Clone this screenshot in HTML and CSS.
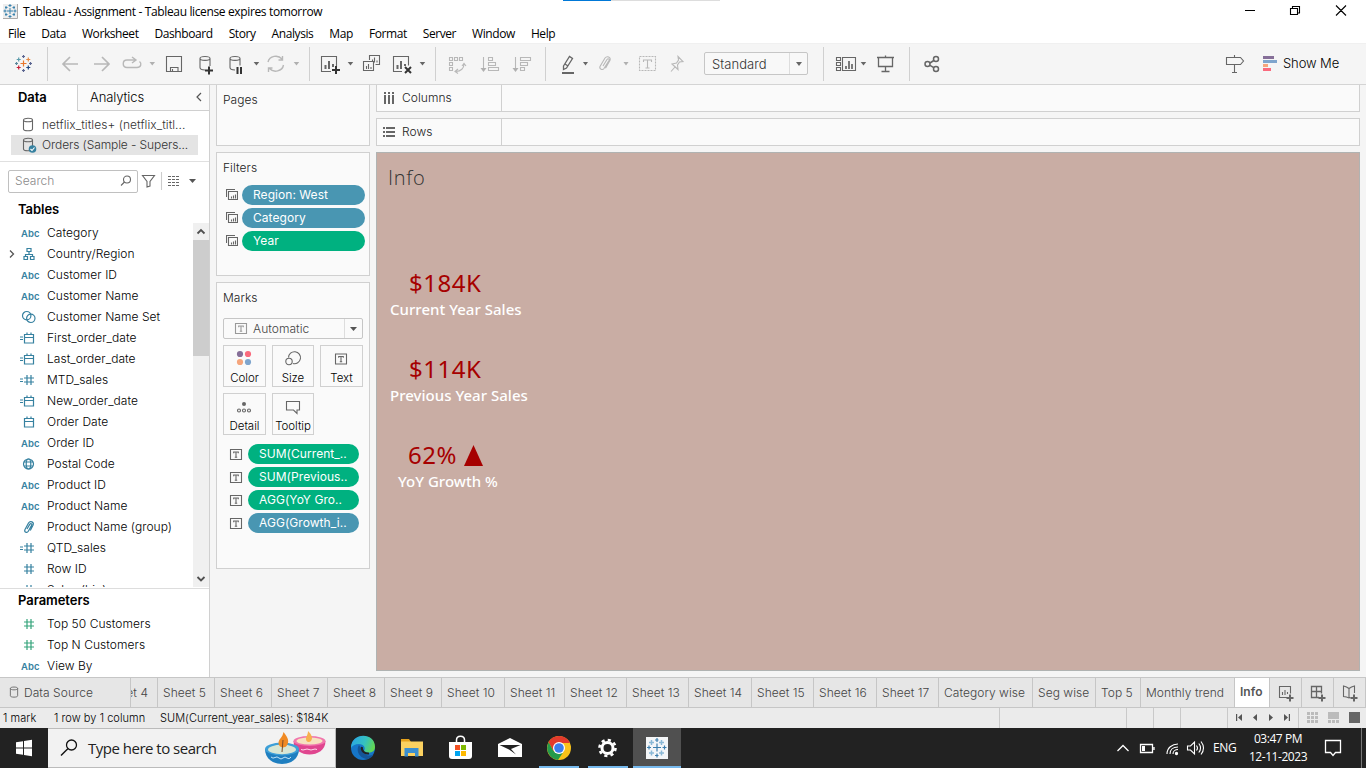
FILE: index.html
```html
<!DOCTYPE html>
<html lang="en">
<head>
<meta charset="utf-8">
<title>Tableau - Assignment</title>
<link rel="stylesheet" href="styles.css">
</head>
<body>
<svg class="defs" width="0" height="0">
  <symbol id="hash" viewBox="0 0 18 14"><path d="M7 2v10M11 2v10M4 5h10M4 9h10"/></symbol>
  <symbol id="eqhash" viewBox="0 0 18 14"><path d="M7 2v10M11 2v10M4 5h10M4 9h10M0 6h3M0 8.500h3"/></symbol>
  <symbol id="cal" viewBox="0 0 18 14"><path d="M4.500 3.500h9v8.500h-9zM4.500 6.500h9M7 1.500v2M11 1.500v2"/></symbol>
  <symbol id="eqcal" viewBox="0 0 18 14"><path d="M4.500 3.500h9v8.500h-9zM4.500 6.500h9M7 1.500v2M11 1.500v2M0 6h3M0 8.500h3"/></symbol>
  <symbol id="tree" viewBox="0 0 18 14"><path d="M7 1.500h4v3h-4zM9 4.500v3M5.500 9.500v-2h7v2M4 9.500h3.500v3H4zM10.500 9.500H14v3h-3.500z"/></symbol>
  <symbol id="rings" viewBox="0 0 18 14"><circle cx="6.700" cy="5.700" r="4.200"/><circle cx="10.800" cy="8.300" r="4.200"/></symbol>
  <symbol id="globe" viewBox="0 0 18 14"><circle cx="8.500" cy="7" r="5"/><ellipse cx="8.500" cy="7" rx="2.300" ry="5"/><path d="M4 5h9M4 9h9"/></symbol>
  <symbol id="clip" viewBox="0 0 18 14"><path d="M7 9l2.700-4.600c1-1.600 2.700-.6 1.900 1L8.300 11.300c-1.300 2.200-4.500.8-3.300-1.800L8.500 3c1.700-2.800 6-1 4.500 2.300L10.300 10.500"/></symbol>
  <symbol id="cyl" viewBox="0 0 12 16"><path d="M1.500 3v9c0 2.300 9 2.300 9 0V3c0-2.300-9-2.300-9 0c0 2.300 9 2.300 9 0"/></symbol>
  <symbol id="tbox" viewBox="0 0 14 13"><path d="M1.500 1.500h11v10h-11zM4.700 5.200V4h4.600v1.200M7 4v5.300M5.800 9.300h2.400"/></symbol>
  <symbol id="ctx" viewBox="0 0 12 12"><path d="M.5 8V.5H9M2.500 10.500v-8h9v8zM5.500 9.500v-2M7.500 9.500V6.500M9.500 9.500v-4"/></symbol>
</svg>

<header class="titlebar">
  <svg width="23" height="22" viewBox="0 0 23 22"><rect x="3" y="4" width="14" height="14" fill="#eee"/><path d="M3 18.500h14.500V4" stroke="#aaa" fill="none"/><g stroke="#3b83ae" fill="none"><path d="M7 11h6M10 8v6M8.500 5.500h3M10 4v3M8.500 16.500h3M10 15v3M3.500 11h3M5 9.500v3M13.500 11h3M15 9.500v3M5 7.500h2.500M6 6v3M12.500 7.500H15M14 6v3M5 14.500h2.500M6 13v3M12.500 14.500H15M14 13v3"/></g></svg>
  <span class="title">Tableau - Assignment - Tableau license expires tomorrow</span>
  <span class="accent"><i></i></span>
  <svg class="wctl" width="136" height="22" viewBox="1230 0 136 22"><path d="M1245 10.500h10M1290.500 8.500h7v6h-7zM1292.500 8.500v-2h7v6.500h-2M1336 5.500l10 10M1346 5.500l-10 10" stroke="#000" fill="none" stroke-width="1.100"/></svg>
</header>

<nav class="menu">
  <span>File</span><span>Data</span><span>Worksheet</span><span>Dashboard</span><span>Story</span><span>Analysis</span><span>Map</span><span>Format</span><span>Server</span><span>Window</span><span>Help</span>
</nav>

<div class="toolbar">
  <svg width="55" height="41" viewBox="0 43 55 41"><g stroke-width="1.200"><path d="M20.500 63.500h6M23.500 60.500v6" stroke="#e8762c"/><path d="M22 56.500h3M23.500 55v3" stroke="#5b6591"/><path d="M22 70.500h3M23.500 69v3" stroke="#5b6591"/><path d="M15 63.500h3M16.500 62v3" stroke="#5b879b"/><path d="M29 63.500h3M30.500 62v3" stroke="#5b6591"/><path d="M16.700 59.500h4M18.700 57.500v4" stroke="#5b9bab"/><path d="M26.300 59.500h4M28.300 57.500v4" stroke="#e88a45"/><path d="M16.700 67.500h4M18.700 65.500v4" stroke="#c72037"/><path d="M26.300 67.500h4M28.300 65.500v4" stroke="#1f447e"/></g><path class="sep" d="M47.500 47v34"/></svg>
  <svg class="dim" width="60" height="41" viewBox="55 43 60 41"><path d="M62.500 64h15.500M70 57l-7 7 7 7M94 64h15.500M102 57l7 7-7 7" stroke-width="1.700"/></svg>
  <svg class="dim" width="45" height="41" viewBox="115 43 45 41"><path d="M135 60h-8c-5 0-5 7.500 0 7.500h10c4 0 5-4 2.500-6M132 57l4 3-4 3" stroke-width="1.400"/><path class="fill" d="M149.500 62h5.500l-2.700 3.500z"/></svg>
  <svg width="28" height="41" viewBox="160 43 28 41"><path d="M166.500 56.500h15v15h-15zM170.500 71.500v-4h7.500v4M172.500 69v2.500"/></svg>
  <svg width="32" height="41" viewBox="188 43 32 41"><path d="M210 66v-7.500c0-2.700-10-2.700-10 0v9c0 1.500 2 2.500 5 2.500M200 58.500c0 2.500 10 2.500 10 0"/><path class="bold" d="M205 70.500h8M209 66.500v8"/></svg>
  <svg width="42" height="41" viewBox="220 43 42 41"><path d="M240 65.500v-7c0-2.700-10-2.700-10 0v9c0 1.500 2 2.500 5 2.500M230 58.500c0 2.500 10 2.500 10 0"/><path class="bold" d="M237.500 67v7M241 67v7"/><path class="fill" d="M253.700 62h5.500l-2.700 3.500z"/></svg>
  <svg class="dim" width="53" height="41" viewBox="262 43 53 41"><path d="M268 62a8 7.500 0 0 1 14-3M283.500 65a8 7.500 0 0 1-14 3.500M282.500 56v4h-4M268.500 72v-4h4" stroke-width="1.400"/><path class="fill" d="M293.700 62h5.500l-2.700 3.500z"/><path class="sep" d="M309.500 47v34"/></svg>
  <svg width="45" height="41" viewBox="315 43 45 41"><path d="M331 71.500h-9.500v-15h15v10"/><path d="M325.500 69v-4M329 69v-8M333 67v-3" stroke-width="2"/><path class="bold" d="M332 70h8M336 66v8"/><path class="fill" d="M347.700 62h5.500l-2.700 3.500z"/></svg>
  <svg width="25" height="41" viewBox="360 43 25 41"><path d="M369.500 60v-4.500h10v9h-4M363.500 61.500h10v9h-10zM366.500 69v-3M368.500 69v-5M371 69v-2M372.500 61v-1.500M374.500 62.500v-5M377 62.500v-2"/></svg>
  <svg width="55" height="41" viewBox="385 43 55 41"><path d="M402 71.500h-8.500v-15h15v9"/><path d="M397.500 69v-4M401 69v-8M405 66v-2" stroke-width="2"/><path class="bold" d="M405 67l6 6M411 67l-6 6"/><path class="fill" d="M419.700 62h5.500l-2.700 3.500z"/><path class="sep" d="M435.500 47v34"/></svg>
  <svg class="dim" width="33" height="41" viewBox="440 43 33 41"><path d="M449.500 57.500h3v3h-3zM454.500 57.500h3v3h-3zM459.500 57.500h3v3h-3zM449.500 62.500h3v3h-3zM449.500 67.500h3v3h-3zM464 64c0 4-3 7.500-8 7.500M462 66l2-2.500 2 2.500M458 69l-3 2.500 3 2"/></svg>
  <svg class="dim" width="32" height="41" viewBox="473 43 32 41"><path d="M483.500 57v13M488.500 57.500h4v3h-4zM488.500 62.500h7v3h-7zM488.500 67.500h10v3h-10z"/><path class="fill" d="M480.500 68h6l-3 4z"/></svg>
  <svg class="dim" width="45" height="41" viewBox="505 43 45 41"><path d="M515.500 57v13M520.500 57.500h10v3h-10zM520.500 62.500h7v3h-7zM520.500 67.500h4v3h-4z"/><path class="fill" d="M512.500 68h6l-3 4z"/><path class="sep" d="M545.500 47v34"/></svg>
  <svg width="42" height="41" viewBox="550 43 42 41"><path d="M563.500 66l6-9.500 3 2-6 9.500-3 1.500zM565 64l3 2" stroke-width="1.300"/><path d="M562 73h12" stroke-width="2"/><path class="fill" d="M583 62h5l-2.500 3.500z"/></svg>
  <svg class="dim" width="40" height="41" viewBox="592 43 40 41"><path d="M603 66l4-6.500c1-1.500 2.700-.5 2 1l-5 8c-1.500 2-5 .5-4-2l5-8.500c2-2.500 6-1 5 2.300l-4.500 8"/><path class="fill" d="M623.500 62h5l-2.500 3.500z"/></svg>
  <svg class="dim" width="30" height="41" viewBox="632 43 30 41"><path d="M639.500 56.500h16v14h-16z" stroke-dasharray="2 1"/><path d="M643.500 62v-2h8v2M647.500 60v8M645.500 68h4"/></svg>
  <svg class="dim" width="42" height="41" viewBox="662 43 42 41"><path d="M678 56.500l5 5-3.500.5-2 3 .5 4.500-6-5.500 4.500-1 2-3zM675 67l-4 4.500"/></svg>
  <div class="zoomsel"><span>Standard</span><b><svg width="6" height="4" viewBox="0 0 6 4"><path class="fill" d="M0 0h6L3 4z"/></svg></b></div>
  <svg width="62" height="41" viewBox="808 43 62 41"><path class="sep" d="M823.500 47v34"/><path d="M836.500 57.500h4v3h-4zM836.500 62.500h4v3h-4zM836.500 67.500h4v3h-4zM842.500 57.500h13v13h-13z"/><path d="M846 69v-3M849 69v-8M852 69v-5" stroke-width="1.700"/><path class="fill" d="M860.700 62h5.500l-2.700 3.500z"/></svg>
  <svg width="30" height="41" viewBox="870 43 30 41"><path d="M877 57.500h17M878.500 57.500v9h14v-9M885.500 55.500v2M885.500 66.500v5M881.500 71.500h8" stroke-width="1.300"/></svg>
  <svg width="50" height="41" viewBox="900 43 50 41"><path class="sep" d="M909.500 47v34"/><g stroke-width="1.500"><circle cx="927.500" cy="64" r="2.500"/><circle cx="936" cy="59" r="2.500"/><circle cx="936" cy="69" r="2.500"/><path d="M930 63l3.800-2.500M930 65.300l3.800 2.400"/></g></svg>
  <svg class="sign" width="30" height="41" viewBox="1220 43 30 41"><path d="M1226.500 57.500h14l3 3.500-3 3.500h-14zM1234.500 55v2.500M1234.500 64.500v8M1232 72.500h5"/></svg>
  <svg width="33" height="41" viewBox="1250 43 33 41"><path stroke="none" fill="#866f98" d="M1263 56h11v3h-11z"/><path stroke="none" fill="#7fa5cd" d="M1263 60h14v3h-14z"/><path stroke="none" fill="#f5a57c" d="M1263 64h5v3h-5z"/><path stroke="none" fill="#fa6a7d" d="M1263 68h8v3h-8z"/></svg>
  <span class="showme">Show Me</span>
</div>

<main class="work">
  <aside class="side">
    <div class="sidetabs"><b>Data</b><div><span>Analytics</span><svg width="8" height="10" viewBox="0 0 8 10"><path d="M6 1L2 5l4 4" stroke="#555" fill="none" stroke-width="1.200"/></svg></div></div>
    <div class="sources">
      <div><svg width="12" height="16" class="gi"><use href="#cyl"/></svg><span>netflix_titles+ (netflix_titl...</span></div>
      <div class="sel"><svg width="16" height="16" viewBox="0 0 16 16" class="gi"><use href="#cyl" width="12" height="16"/><circle cx="10.500" cy="12" r="3.800" fill="#3681a0" stroke="none"/><path d="M8.500 12l1.500 1.500 2.500-3" stroke="#fff"/></svg><span>Orders (Sample - Supers...</span></div>
    </div>
    <div class="searchrow">
      <div class="search"><span>Search</span><svg width="12" height="12" viewBox="0 0 12 12" class="gi"><circle cx="7" cy="4.500" r="3.500"/><path d="M4.500 7L1 10.500"/></svg></div>
      <svg width="71" height="24" viewBox="138 169 71 24" class="gi"><path d="M142.500 175.500h12l-4.500 6v4.500l-3 1v-5.500z"/><path d="M161.500 172v18" stroke="#ccc"/><path d="M168 176.500h12M168 179.500h12M168 182.500h12M168 185.500h12" stroke-dasharray="3 1" /><path d="M189 179h7l-3.500 4z" fill="#555" stroke="none"/></svg>
    </div>
    <h2>Tables</h2>
    <div class="listwrap">
      <div class="list">
        <div><em>Abc</em><span>Category</span></div>
        <div><svg class="exp" width="6" height="10" viewBox="0 0 6 10"><path d="M1 1.500L4.500 5 1 8.500"/></svg><svg class="fi"><use href="#tree"/></svg><span>Country/Region</span></div>
        <div><em>Abc</em><span>Customer ID</span></div>
        <div><em>Abc</em><span>Customer Name</span></div>
        <div><svg class="fi"><use href="#rings"/></svg><span>Customer Name Set</span></div>
        <div><svg class="fi"><use href="#eqcal"/></svg><span>First_order_date</span></div>
        <div><svg class="fi"><use href="#eqcal"/></svg><span>Last_order_date</span></div>
        <div><svg class="fi"><use href="#eqhash"/></svg><span>MTD_sales</span></div>
        <div><svg class="fi"><use href="#eqcal"/></svg><span>New_order_date</span></div>
        <div><svg class="fi"><use href="#cal"/></svg><span>Order Date</span></div>
        <div><em>Abc</em><span>Order ID</span></div>
        <div><svg class="fi"><use href="#globe"/></svg><span>Postal Code</span></div>
        <div><em>Abc</em><span>Product ID</span></div>
        <div><em>Abc</em><span>Product Name</span></div>
        <div><svg class="fi"><use href="#clip"/></svg><span>Product Name (group)</span></div>
        <div><svg class="fi"><use href="#eqhash"/></svg><span>QTD_sales</span></div>
        <div><svg class="fi"><use href="#hash"/></svg><span>Row ID</span></div>
        <div><svg class="fi"><use href="#hash"/></svg><span>Sales (bin)</span></div>
      </div>
      <div class="scroll"><svg width="16" height="17" viewBox="0 0 16 17"><path d="M4.500 10.500L8 7l3.500 3.500"/></svg><i></i><svg width="16" height="17" viewBox="0 0 16 17"><path d="M4.500 7L8 10.500 11.500 7"/></svg></div>
    </div>
    <div class="params">
      <h2>Parameters</h2>
      <div class="list">
        <div><svg class="fi green"><use href="#hash"/></svg><span>Top 50 Customers</span></div>
        <div><svg class="fi green"><use href="#hash"/></svg><span>Top N Customers</span></div>
        <div><em>Abc</em><span>View By</span></div>
      </div>
    </div>
  </aside>

  <section class="cards">
    <div class="card pages"><h3>Pages</h3></div>
    <div class="card filters"><h3>Filters</h3>
      <div class="frow"><svg class="gi" width="12" height="12"><use href="#ctx"/></svg><span class="pill blue">Region: West</span></div>
      <div class="frow"><svg class="gi" width="12" height="12"><use href="#ctx"/></svg><span class="pill blue">Category</span></div>
      <div class="frow"><svg class="gi" width="12" height="12"><use href="#ctx"/></svg><span class="pill">Year</span></div>
    </div>
    <div class="card marks"><h3>Marks</h3>
      <div class="marktype"><svg class="gi faint" width="14" height="13"><use href="#tbox"/></svg><span>Automatic</span><b><svg width="7" height="4" viewBox="0 0 7 4"><path d="M0 0h7L3.500 4z" fill="#555"/></svg></b></div>
      <div class="btns">
        <div><svg width="20" height="18" viewBox="1 1 20 18"><circle cx="6" cy="5" r="3.100" fill="#866f98"/><circle cx="14" cy="5" r="3.100" fill="#fa6a7d"/><circle cx="6" cy="13" r="3.100" fill="#f5a57c"/><circle cx="14" cy="13" r="3.100" fill="#7fa5cd"/></svg><span>Color</span></div>
        <div><svg class="gi" width="20" height="18" viewBox="0 0 20 18"><path d="M5.500 7.500a6 6 0 1 1 4.500 6"/><circle cx="6" cy="11.500" r="3.200"/></svg><span>Size</span></div>
        <div><svg class="gi" width="20" height="18" viewBox="1 0 20 18"><use href="#tbox" x="3" y="2.500" width="14" height="13"/></svg><span>Text</span></div>
        <div><svg class="gi" width="20" height="18" viewBox="1 0 20 18"><circle cx="10" cy="6" r="2" fill="#666" stroke="none"/><circle cx="5" cy="12.500" r="1.500"/><circle cx="10" cy="12.500" r="1.500"/><circle cx="15" cy="12.500" r="1.500"/></svg><span>Detail</span></div>
        <div><svg class="gi" width="20" height="18" viewBox="0 0 20 18"><path d="M3.500 3.500h13v8.500h-2.500v3.500L10.500 12h-7z"/></svg><span>Tooltip</span></div>
      </div>
      <div class="mrow"><svg class="gi" width="14" height="13"><use href="#tbox"/></svg><span class="pill">SUM(Current_..</span></div>
      <div class="mrow"><svg class="gi" width="14" height="13"><use href="#tbox"/></svg><span class="pill">SUM(Previous..</span></div>
      <div class="mrow"><svg class="gi" width="14" height="13"><use href="#tbox"/></svg><span class="pill">AGG(YoY Gro..</span></div>
      <div class="mrow"><svg class="gi" width="14" height="13"><use href="#tbox"/></svg><span class="pill blue">AGG(Growth_i..</span></div>
    </div>
  </section>

  <section class="view">
    <div class="shelf"><div><svg width="14" height="14" viewBox="0 0 14 14"><path fill="#666" d="M2 1h2v2H2zM6 1h2v2H6zM10 1h2v2h-2zM2 4h2v9H2zM6 4h2v9H6zM10 4h2v9h-2z"/></svg><span>Columns</span></div></div>
    <div class="shelf"><div><svg width="14" height="14" viewBox="0 0 14 14"><path fill="#666" d="M1 2h2v2H1zM1 6h2v2H1zM1 10h2v2H1zM4 2h9v2H4zM4 6h9v2H4zM4 10h9v2H4z"/></svg><span>Rows</span></div></div>
    <div class="canvas">
      <h1>Info</h1>
      <div class="kpi k1"><strong>$184K</strong><span>Current Year Sales</span></div>
      <div class="kpi k2"><strong>$114K</strong><span>Previous Year Sales</span></div>
      <div class="kpi k3"><strong>62% <svg width="19" height="21" viewBox="0 0 19 21"><path d="M9.500 0L19 21H0z" fill="#a60000"/></svg></strong><span>YoY Growth %</span></div>
    </div>
  </section>
</main>

<div class="tabs">
  <div class="ds"><svg class="gi" width="10" height="13" viewBox="0 0 12 16"><use href="#cyl" width="12" height="16"/></svg><span>Data Source</span></div>
  <div class="cut"><span>et 4</span></div><div>Sheet 5</div><div>Sheet 6</div><div>Sheet 7</div><div>Sheet 8</div><div>Sheet 9</div><div>Sheet 10</div><div>Sheet 11</div><div>Sheet 12</div><div>Sheet 13</div><div>Sheet 14</div><div>Sheet 15</div><div>Sheet 16</div><div>Sheet 17</div><div>Category wise</div><div>Seg wise</div><div>Top 5</div><div>Monthly trend</div><div class="on">Info</div>
  <div class="ic"><svg class="gi" width="31" height="28" viewBox="1270 678 31 28"><path d="M1287 697.500h-7.500v-11h11v7M1282.500 695v-3M1285 695v-5M1287.500 694v-2"/><path d="M1286.500 698h7M1290 694.500v7" stroke-width="2"/></svg></div>
  <div class="ic"><svg class="gi" width="31" height="28" viewBox="1302 678 31 28"><path d="M1319 697.500h-7.500v-11h10v7M1311.500 691.500h10M1316.500 686.500v11" stroke-width="1.300"/><path d="M1318.500 698h7M1322 694.500v7" stroke-width="2"/></svg></div>
  <div class="ic"><svg class="gi" width="31" height="28" viewBox="1334 678 31 28"><path d="M1354.500 693v-7l-3 1-2.500 1.500-2.500-1.500-3-1v10.500l3 .5 2.500 1 1.500-.5M1349 688.500v9"/><path d="M1350.500 698h7M1354 694.500v7" stroke-width="2"/></svg></div>
</div>

<div class="status">
  <span class="s1">1 mark</span><span class="s2">1 row by 1 column</span><span class="s3">SUM(Current_year_sales): $184K</span>
  <svg width="370" height="20" viewBox="996 708 370 20"><path d="M999.500 708v20M1126.500 708v20M1153.500 708v20M1180.500 708v20M1227.500 708v20M1298.500 708v20" stroke="#c9c9c9"/><path fill="#555" d="M1236 714h1.200v7H1236zM1242 714v7l-4-3.500zM1257 714v7l-4-3.500zM1269 714v7l4-3.500zM1284 714v7l4-3.500zM1288.800 714h1.200v7h-1.200z"/><path fill="#bbb" d="M1307 712h3v3h-3zM1311 712h3v3h-3zM1315 712h3v3h-3zM1307 716h3v3h-3zM1311 716h3v3h-3zM1315 716h3v3h-3zM1307 720h3v3h-3zM1311 720h3v3h-3zM1315 720h3v3h-3zM1328 712h11v7h-11zM1328 720h3v3h-3zM1332 720h3v3h-3zM1336 720h3v3h-3z"/><rect x="1349" y="712" width="11" height="11" fill="#666"/></svg>
</div>

<footer class="taskbar">
  <svg width="48" height="40" viewBox="0 728 48 40"><path fill="#fff" d="M16 742.200l7-1v6.300h-7zM24 741l8-1.200v7.700h-8zM16 748.500h7v6.300l-7-1zM24 748.500h8v7.700l-8-1.200z"/></svg>
  <div class="tsearch">
    <svg width="40" height="40" viewBox="48 728 40 40"><circle cx="71.500" cy="745" r="5" fill="none" stroke="#111" stroke-width="1.300"/><path d="M67.800 748.700L61 755.500" stroke="#111" stroke-width="1.400"/></svg>
    <span>Type here to search</span>
    <svg class="diya" width="66" height="38" viewBox="263 729 66 38"><path d="M293.500 741c0 18 32 18 32 0z" fill="#e0468f"/><ellipse cx="309.500" cy="741" rx="16" ry="5" fill="#f176ad"/><ellipse cx="309.500" cy="741" rx="13" ry="3.500" fill="#f6e3c0"/><path d="M308 731c4 4 5 7 3 10-2 2-5 1-5-2 0-3 2-4 2-8z" fill="#f7b04e"/><path d="M301 749.500q2 1 4 0t4 0 4 0 4 0" stroke="#ffd9ea" fill="none"/><path d="M265 749c0 20 34 20 34 0z" fill="#1f7fc0"/><ellipse cx="282" cy="749" rx="17" ry="6.500" fill="#3d9fd8"/><ellipse cx="282" cy="749.500" rx="14" ry="4.700" fill="#d8e6d4"/><path d="M283.500 732c5 6 6 10 3 14-3 3-8 1-8-3 0-4 4-5 5-11z" fill="#f08a24"/><path d="M283 740l-1 12" stroke="#7a4b28"/><path d="M271 757q2 2 4 .5t4 .5 4 0 4 0 4-1" stroke="#bfe4f8" fill="none"/></svg>
  </div>
  <svg class="app" width="51" height="40" viewBox="336 728 51 40"><defs><linearGradient id="eg" x1="0" x2="1" y1="0.300" y2="0.600"><stop offset="0" stop-color="#2aa5e4"/><stop offset=".55" stop-color="#35c1c0"/><stop offset="1" stop-color="#66d84a"/></linearGradient></defs><circle cx="363" cy="748" r="12" fill="#1675c8"/><path d="M351 748c0-16 24-16 24-1 0 6-7 7-11 4 2-3 0-7-5-7-4 0-7 2-8 4z" fill="url(#eg)"/><path d="M359 745c-4 7 2 14 9 14 3-1 5-3 5.500-4.500-4 2-10 1-11-4z" fill="#155597"/><path d="M362 747c-1 4 3 7 7 6.500" stroke="#222" fill="none" stroke-width="2"/></svg>
  <svg class="app" width="49" height="40" viewBox="387 728 49 40"><path fill="#e6a21c" d="M401 739h8l2 3h-10z"/><path fill="#fbd160" d="M401 741.500h22V756h-22z"/><path fill="#3b8fd0" d="M404.500 756.500v-8.500h14v8.500h-3.500v-3.500h-7v3.500z"/></svg>
  <svg class="app" width="49" height="40" viewBox="436 728 49 40"><path d="M456.500 743v-3c0-5 8-5 8 0v3" stroke="#fff" fill="none" stroke-width="1.500"/><path d="M449 742h23v14c0 2-1 3-3 3h-17c-2 0-3-1-3-3z" fill="#fff"/><path fill="#f25022" d="M455 745h5v5h-5z"/><path fill="#7fba00" d="M461 745h5v5h-5z"/><path fill="#00a4ef" d="M455 751h5v5h-5z"/><path fill="#ffb900" d="M461 751h5v5h-5z"/></svg>
  <svg class="app" width="49" height="40" viewBox="485 728 49 40"><path fill="#fff" d="M498 744l12-6 12 6v13h-24z"/><path fill="#222" d="M499.500 745h21l-9.500 4 5 5.500-7-5z"/></svg>
  <svg class="app" width="49" height="40" viewBox="534 728 49 40"><circle cx="559" cy="748" r="12" fill="#f9c21a"/><path fill="#e23a2c" d="M548.500 742.200a12 12 0 0 1 21.500.8h-11l-5.500 8z"/><path fill="#249a4b" d="M548.600 742.200a12 12 0 0 0 9.400 17.700l6-9-5 3-5.500-3z"/><circle cx="559" cy="748" r="6" fill="#fff"/><circle cx="559" cy="748" r="4.800" fill="#3b7ded"/><path fill="#76b9ed" d="M539 766h40v2h-40z"/></svg>
  <svg class="app" width="50" height="40" viewBox="583 728 50 40"><circle cx="607.500" cy="748" r="5.500" fill="none" stroke="#fff" stroke-width="3"/><circle cx="607.500" cy="748" r="8" fill="none" stroke="#fff" stroke-width="2.600" stroke-dasharray="3.140 3.143"/><path fill="#76b9ed" d="M588 766h40v2h-40z"/></svg>
  <svg class="app active" width="48" height="40" viewBox="633 728 48 40"><path fill="#f4f6f8" d="M646 737h22v22h-22z"/><g stroke="#8ab8d6" stroke-width="1.500"><path d="M649 742.500h5M651.500 740v5M659 742.500h5M661.500 740v5M649 753h5M651.500 750.500v5M659 753h5M661.500 750.500v5"/></g><path d="M653 747.500h8M657 743.500v8M655 740h3.500M657 738v4M655 755.500h3.500M657 753.500v4M647 747.500h4M649 745.500v4M662.500 747.500h4M664.500 745.500v4" stroke="#3d7fae" stroke-width="1.200"/><path fill="#76b9ed" d="M633 766h48v2h-48z"/></svg>
  <svg class="tray" width="97" height="40" viewBox="1110 728 97 40"><g stroke="#fff" fill="none" stroke-width="1.300"><path d="M1117.500 751l5.500-5.500 5.500 5.500M1140.500 744.500h12v8h-12zM1154 747v3"/><path fill="#fff" stroke="none" d="M1142 746h3v5h-3z"/><path d="M1167 754c0-6 5-10 11-10M1170 754c0-4 3-7 8-7M1173 754c0-2.500 2-4.500 5-4.500" stroke-width="1.100"/><circle cx="1176.500" cy="753.500" r="1" fill="#fff"/><path d="M1187.500 746h3l4-4v12l-4-4h-3zM1196.500 745.500q2 2.500 0 5M1198.800 743.500q3.500 4.500 0 9M1201 741.500q5 6.500 0 13" stroke-width="1.100"/></g></svg>
  <span class="eng">ENG</span>
  <div class="clock"><span>03:47 PM</span><span>12-11-2023</span></div>
  <svg class="note" width="56" height="40" viewBox="1310 728 56 40"><path d="M1325.500 740.500h15v12h-5l-2.500 3-2.500-3h-5z" stroke="#fff" fill="none" stroke-width="1.300"/><path d="M1361.500 728v40" stroke="#777"/></svg>
</footer>
</body>
</html>
```
FILE: styles.css
```css
* { box-sizing: border-box; }
body { margin: 0; width: 1366px; height: 768px; overflow: hidden; display: flex; flex-direction: column; background: #f5f5f5; color: #333; font: 300 12px/16px Inter, "Liberation Sans", sans-serif; letter-spacing: .05px; }
.defs { position: absolute; }
svg { flex: none; display: block; }
h1, h2, h3 { margin: 0; font-weight: 300; }
span { white-space: nowrap; }

.titlebar { height: 22px; flex: none; display: flex; align-items: center; background: #fff; color: #000; font: 12px "Open Sans", sans-serif; letter-spacing: -.36px; }
.title { width: 540px; }
.accent { align-self: flex-start; width: 157px; height: 1px; background: #ddd; }
.accent i { display: block; width: 48px; height: 1px; background: #0078d7; }
.wctl { margin-left: auto; }
.menu { height: 21px; flex: none; display: flex; align-items: center; gap: 16px; padding: 2px 0 0 8px; background: #fff; color: #000; font: 12px "Open Sans", sans-serif; letter-spacing: -.42px; }

.toolbar { height: 42px; flex: none; display: flex; background: #f5f5f5; border-bottom: 1px solid #d4d4d4; border-top: 1px solid #f0f0f0; }
.toolbar svg { fill: none; stroke: #666; stroke-width: 1.1; margin-top: -1px; }
.toolbar .dim { stroke: #b8b8b8; }
.toolbar .fill { fill: #666; stroke: none; }
.toolbar .dim .fill { fill: #b0b0b0; }
.toolbar .bold { stroke: #333; stroke-width: 2; }
.toolbar .sep { stroke: #d0d0d0; stroke-width: 1; }
.zoomsel { width: 104px; height: 23px; margin-top: 8px; border: 1px solid #c6c6c6; border-radius: 2px; display: flex; align-items: center; justify-content: space-between; background: #f8f8f8; color: #333; font-size: 13px; padding-left: 7px; }
.zoomsel b { width: 18px; height: 21px; border-left: 1px solid #ddd; display: flex; align-items: center; justify-content: center; }
.zoomsel svg { margin: 0; }
.toolbar .sign { margin-left: 270px; }
.showme { font-size: 13px; color: #000; padding-top: 11px; letter-spacing: -.1px; }

.work { height: 592px; flex: none; display: flex; }
.side { width: 210px; background: #fff; border-right: 1px solid #d0d0d0; display: flex; flex-direction: column; }
.sidetabs { height: 26px; flex: none; display: flex; color: #000; font-size: 13px; letter-spacing: -.1px; }
.sidetabs b { width: 77px; padding: 4px 0 0 18px; font-weight: 600; }
.sidetabs div { flex: 1; background: #fafafa; border-left: 1px solid #d0d0d0; border-bottom: 1px solid #d0d0d0; display: flex; align-items: center; justify-content: space-between; padding: 0 6px 1px 12px; color: #000; }
.sources { height: 51px; flex: none; border-bottom: 1px solid #e0e0e0; padding: 4px 11px 0; color: #333; }
.sources div { height: 20px; display: flex; align-items: center; padding-left: 11px; }
.sources span { margin-left: 8px; }
.sources .sel { background: #e4e4e4; letter-spacing: -.1px; }
.sources .sel span { margin-left: 4px; }
.gi { fill: none; stroke: #666; stroke-width: 1.1; }
.searchrow { height: 38px; flex: none; display: flex; align-items: center; padding-left: 8px; }
.search { width: 130px; height: 23px; border: 1px solid #c0c0c0; border-radius: 2px; display: flex; align-items: center; justify-content: space-between; padding: 0 5px 0 6px; color: #8a8a8a; }
h2 { font: 600 13px/18px Inter, sans-serif; color: #000; padding-left: 18px; flex: none; height: 23px; letter-spacing: -.05px; }
.listwrap { display: flex; height: 364px; flex: none; overflow: hidden; }
.list { flex: 1; }
.listwrap .list { margin-top: -1px; }
.list div { height: 21px; display: flex; align-items: center; padding-left: 20px; position: relative; color: #000; }
.list em { width: 27px; font: 600 9.500px Inter, sans-serif; color: #3681a0; padding: 2px 0 0 1px; }
.fi { width: 18px; height: 14px; margin-right: 9px; fill: none; stroke: #3681a0; stroke-width: 1.2; }
.green { stroke: #34a37b; }
.exp { position: absolute; left: 9px; top: 6px; fill: none; stroke: #555; stroke-width: 1.3; }
.scroll { width: 16px; background: #f0f0f0; display: flex; flex-direction: column; }
.scroll i { height: 116px; background: #cdcdcd; margin-bottom: auto; }
.scroll path { fill: none; stroke: #505050; stroke-width: 1.8; }
.params { border-top: 1px solid #ddd; margin-top: 1px; padding-top: 2px; }
.params h2 { height: 22px; }

.cards { width: 154px; margin-left: 6px; display: flex; flex-direction: column; gap: 6px; }
.card { border: 1px solid #d0d0d0; background: #fafafa; color: #222; }
.card h3 { font-size: 12px; padding: 7px 6px 0; }
.pages { height: 61px; border-top: 0; }
.filters { height: 124px; }
.marks { height: 287px; }
.frow { height: 20px; margin: 0 4px 3px 9px; display: flex; align-items: center; justify-content: space-between; }
.filters h3 { margin-bottom: 9px; }
.pill { height: 20px; width: 123px; border-radius: 10px; background: #00b180; color: #fff; padding: 0 0 0 11px; line-height: 20px; font-weight: 400; }
.pill.blue { background: #4996b2; }
.marktype { margin: 12px 6px 6px; height: 21px; border: 1px solid #c6c6c6; border-radius: 2px; display: flex; align-items: center; padding-left: 10px; color: #444; }
.marktype span { margin-left: 5px; }
.marktype b { margin-left: auto; width: 18px; height: 19px; border-left: 1px solid #ddd; display: flex; align-items: center; justify-content: center; }
.faint { stroke: #999; }
.btns { display: grid; grid-template-columns: 43px 42px 43px; gap: 6px; margin: 0 6px; }
.btns div { height: 42px; border: 1px solid #d0d0d0; display: flex; flex-direction: column; align-items: center; padding-top: 4px; font-size: 11.500px; letter-spacing: -.05px; color: #000; }
.btns span { margin-top: 2px; }
.mrow { height: 20px; margin: 0 10px 3px 12px; display: flex; align-items: center; justify-content: space-between; }
.btns + .mrow { margin-top: 9px; }
.mrow .pill { width: 111px; }

.view { width: 984px; margin-left: 6px; }
.shelf { height: 28px; margin-bottom: 6px; border: 1px solid #d0d0d0; background: #fafafa; color: #222; }
.shelf:first-child { border-top: 0; height: 27px; }
.shelf div { width: 125px; height: 100%; border-right: 1px solid #d0d0d0; display: flex; align-items: center; gap: 6px; padding-left: 5px; }
.canvas { height: 519px; background: #c9ada4; border: 1px solid #b0b3b2; padding: 11px 11px; font-family: "Noto Sans", sans-serif; color: #fff; }
h1 { font: 300 20px/28px "Open Sans", sans-serif; letter-spacing: .7px; color: #333; height: 103px; }
.kpi { height: 86px; width: 150px; display: flex; flex-direction: column; padding-left: 2px; }
.kpi strong { font: 24px/32px "Noto Sans", sans-serif; letter-spacing: .5px; color: #a60000; padding-left: 19px; display: flex; align-items: center; gap: 6px; }
.kpi span { font-size: 15px; font-weight: 500; line-height: 20px; letter-spacing: .02px; }
.k3 strong { padding-left: 18px; }
.k3 svg { margin-left: 1px; }
.k3 span { padding-left: 8px; }

.tabs { height: 31px; flex: none; display: grid; grid-template-columns: 131px 27px 57px 57px 56px 57px 57px 63px 60px 62px 62px 63px 62px 63px 62px 94px 63px 45px 94px 35px 32px 32px 32px; background: #e6e6e6; border-top: 1px solid #c6c6c6; border-bottom: 1px solid #c6c6c6; color: #444; }
.tabs > div { border-right: 1px solid #c6c6c6; padding-left: 5px; line-height: 29px; white-space: nowrap; overflow: hidden; }
.tabs .ds { display: flex; align-items: center; padding-left: 9px; gap: 5px; }
.tabs .cut { padding-left: 0; display: flex; justify-content: flex-end; padding-right: 9px; }
.tabs .on { background: #fff; font-weight: 600; color: #555; line-height: 27px; }
.tabs .ic { padding: 0; }
.status { height: 20px; flex: none; display: flex; align-items: center; background: #ebebeb; color: #000; font-size: 11px; padding-left: 3px; }
.s1 { width: 51px; }
.s2 { width: 106px; }
.status svg { margin-left: auto; }
.taskbar { height: 40px; flex: none; display: flex; background: #222; color: #fff; font: 12px "Open Sans", sans-serif; }
.tsearch { width: 288px; background: #f2f2f2; border: 1px solid #bbb; border-left: 0; display: flex; align-items: center; color: #222; font-size: 15px; letter-spacing: -.5px; }
.diya { margin-left: auto; margin-right: 6px; }
.active { background: #505050; }
.tray { margin-left: auto; }
.eng { width: 35px; padding: 11px 0 0 6px; letter-spacing: -.3px; }
.clock { width: 68px; display: flex; flex-direction: column; align-items: center; line-height: 18px; padding: 2px 0 0 4px; letter-spacing: -.45px; }
```
